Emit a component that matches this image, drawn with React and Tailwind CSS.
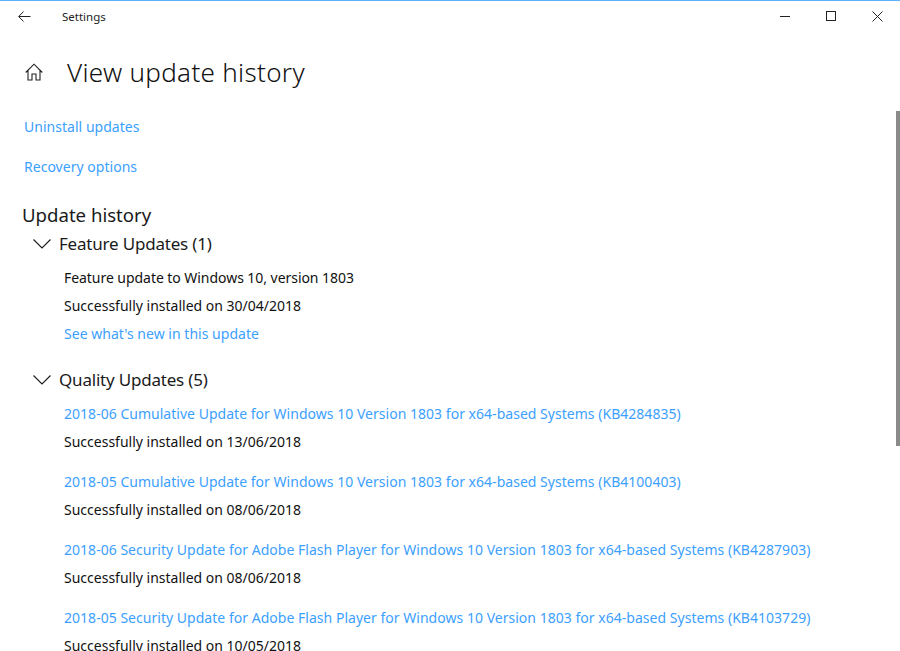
import React from "react";

const linkClass = "text-[#3ca0ff] tracking-[0.025px]";

function Chevron() {
  return (
    <svg width="18" height="10" viewBox="0 0 18 10" fill="none" stroke="#1a1a1a" strokeWidth="1.1">
      <path d="M0.5 0.5 L9 9 L17.5 0.5" />
    </svg>
  );
}

function UpdateGroup({ title, children }) {
  return (
    <div>
      <div className="flex items-center h-7 pl-[33px] gap-[8px] text-[17px] tracking-[-0.2px] text-[#1a1a1a]">
        <Chevron />
        <span>{title}</span>
      </div>
      <div className="pl-[64px] pt-[6px]">{children}</div>
    </div>
  );
}

function Row({ link, children }) {
  return <div className={`h-7 leading-7 whitespace-nowrap ${link ? linkClass : "text-[#111]"}`}>{children}</div>;
}

const qualityUpdates = [
  ["2018-06 Cumulative Update for Windows 10 Version 1803 for x64-based Systems (KB4284835)", "13/06/2018"],
  ["2018-05 Cumulative Update for Windows 10 Version 1803 for x64-based Systems (KB4100403)", "08/06/2018"],
  ["2018-06 Security Update for Adobe Flash Player for Windows 10 Version 1803 for x64-based Systems (KB4287903)", "08/06/2018"],
  ["2018-05 Security Update for Adobe Flash Player for Windows 10 Version 1803 for x64-based Systems (KB4103729)", "10/05/2018"],
];

export default function App() {
  return (
    <div className="relative w-[900px] h-[651px] overflow-hidden bg-white text-[14px] font-['Noto_Sans',sans-serif]">
      {/* Title bar */}
      <div className="flex items-center h-[31px] border-t border-[#5eb0fb]">
        <div className="w-[48px] flex justify-center">
          <svg width="13" height="11" viewBox="0 0 13 11" fill="none" stroke="#222" strokeWidth="1">
            <path d="M12.5 5.5 H1 M5.5 0.5 L0.7 5.5 L5.5 10.5" />
          </svg>
        </div>
        <span className="ml-[14px] mt-[1px] text-[11.5px] text-[#222]">Settings</span>
        <div className="ml-auto flex items-center">
          <div className="w-[46px] flex justify-center">
            <div className="w-[10px] h-px bg-[#222]" />
          </div>
          <div className="w-[46px] flex justify-center">
            <div className="w-[10px] h-[10px] border border-[#222]" />
          </div>
          <div className="w-[46px] flex justify-center">
            <svg width="11" height="11" viewBox="0 0 11 11" stroke="#222" strokeWidth="1">
              <path d="M0.5 0.5 L10.5 10.5 M10.5 0.5 L0.5 10.5" />
            </svg>
          </div>
        </div>
      </div>

      {/* Page header */}
      <div className="flex items-center h-[44px] mt-[19px] pl-[25px]">
        <svg width="18" height="18" viewBox="0 0 18 18" fill="none" stroke="#222" strokeWidth="1.1">
          <path d="M0.7 9.5 L9 1.2 L17.3 9.5 M3 7.5 V17 H7 V11 H11 V17 H15 V7.5" />
        </svg>
        <h1 className="ml-[24px] text-[26px] font-light tracking-[0.32px] text-[#111]">View update history</h1>
      </div>

      <div className={`pl-[24px] mt-[13px] h-10 leading-10 ${linkClass}`}>Uninstall updates</div>
      <div className={`pl-[24px] h-10 leading-10 ${linkClass}`}>Recovery options</div>

      <h2 className="pl-[22px] mt-[14px] h-7 leading-7 text-[18.6px] text-[#1a1a1a]">Update history</h2>

      <div className="mt-[1px]">
        <UpdateGroup title="Feature Updates (1)">
          <div className="tracking-[-0.05px]">
            <Row>Feature update to Windows 10, version 1803</Row>
          </div>
          <Row>Successfully installed on 30/04/2018</Row>
          <Row link>See what's new in this update</Row>
        </UpdateGroup>
      </div>

      <div className="mt-[18px]">
        <UpdateGroup title="Quality Updates (5)">
          {qualityUpdates.map(([name, date]) => (
            <div key={name} className="mb-[12px]">
              <Row link>{name}</Row>
              <Row>Successfully installed on {date}</Row>
            </div>
          ))}
        </UpdateGroup>
      </div>

      {/* Scrollbar thumb */}
      <div className="absolute right-0 top-[111px] w-[4px] h-[335px] bg-[#8a8a8a]" />
    </div>
  );
}
